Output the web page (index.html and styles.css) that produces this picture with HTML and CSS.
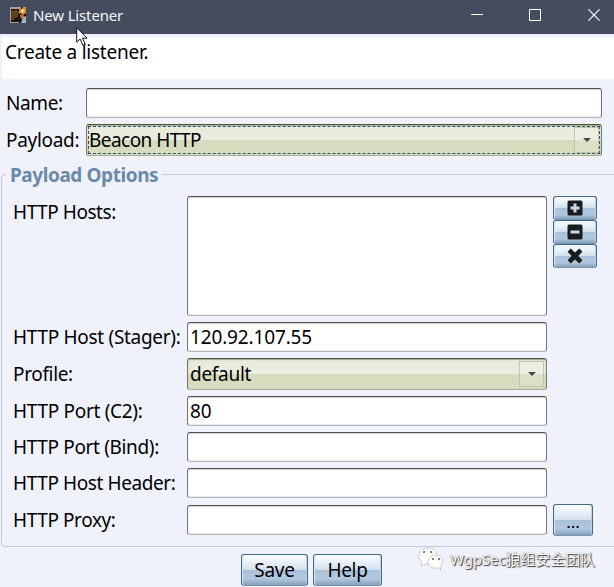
FILE: index.html
```html
<!DOCTYPE html>
<html lang="en">
<head>
<meta charset="utf-8">
<title>New Listener</title>
<link rel="stylesheet" href="styles.css">
</head>
<body>
<div class="window">
  <header class="titlebar">
    <svg class="app-icon" width="16" height="16" viewBox="0 0 16 16"><rect width="16" height="16" fill="#1a140f"/><path d="M0 0h11v2H0zM0 2h1v14H0zM0 15h9v1H0z" fill="#a9a294"/><path d="M1 3l3 1 2-2 3 3-1 5-3 1-2 3-2-2z" fill="#5c421d"/><path d="M9 1l2 2 2-3 3 0v6l-3 2-2-2-2 1z" fill="#df922c"/><path d="M11 2l3 1-1 3-2-1z" fill="#f8e2ae"/><path d="M10 8l3-1 1 3-3 2z" fill="#c9783a"/><path d="M13 10l3-1v7h-5z" fill="#a8b2b8"/></svg>
    <span class="title">New Listener</span>
    <div class="controls">
      <svg width="12" height="12" viewBox="0 0 12 12"><path d="M0 5.5h12" stroke="#fff"/></svg>
      <svg width="12" height="12" viewBox="0 0 12 12"><path d="M.5.5h11v11H.5z" fill="none" stroke="#fff"/></svg>
      <svg width="12" height="12" viewBox="0 0 12 12"><path d="M.4.4l11.2 11.2M11.6.4L.4 11.6" stroke="#fff" stroke-width="1.2"/></svg>
    </div>
  </header>
  <p class="description">Create a listener.</p>
  <div class="general">
    <span class="label name">Name:</span><div class="field"></div>
    <span class="label payload">Payload:</span>
    <div class="combo focused"><span class="beacon">Beacon HTTP</span><i class="arrow"></i></div>
  </div>
  <section class="options">
    <h2 class="legend">Payload Options</h2>
    <div class="row hosts"><span class="label">HTTP Hosts:</span><div class="field"></div>
      <div class="stack">
        <div class="button"><svg width="16" height="16" viewBox="0 0 16 16"><rect x=".5" y=".5" width="15" height="15" rx="1.5" fill="#1b1b1b"/><path d="M6.5 3.5h3v3h3v3h-3v3h-3v-3h-3v-3h3z" fill="#c5d9ec"/></svg></div>
        <div class="button"><svg width="16" height="16" viewBox="0 0 16 16"><rect x=".5" y=".5" width="15" height="15" rx="1.5" fill="#1b1b1b"/><path d="M3.5 6.5h9v3h-9z" fill="#c5d9ec"/></svg></div>
        <div class="button"><svg width="16" height="16" viewBox="0 0 16 16"><path d="M3.7.6L8 4.6 12.3.6 15.4 3.7 11.4 8l4 4.3-3.1 3.1L8 11.4l-4.3 4L.6 12.3 4.6 8 .6 3.7z" fill="#1b1b1b"/></svg></div>
      </div>
    </div>
    <div class="row"><span class="label stager">HTTP Host (Stager):</span><div class="field"><span class="ip">120.92.107.55</span></div></div>
    <div class="row"><span class="label profile">Profile:</span><div class="combo"><span class="default">default</span><i class="arrow"></i></div></div>
    <div class="row"><span class="label c2">HTTP Port (C2):</span><div class="field"><span>80</span></div></div>
    <div class="row"><span class="label bind">HTTP Port (Bind):</span><div class="field"></div></div>
    <div class="row"><span class="label header">HTTP Host Header:</span><div class="field"></div></div>
    <div class="row proxy"><span class="label">HTTP Proxy:</span><div class="field"></div><div class="button more">...</div></div>
  </section>
  <footer class="actions"><div class="button save">Save</div><div class="button help">Help</div></footer>
  <div class="watermark">
    <svg width="26" height="24" viewBox="0 0 26 24"><g stroke="#aaa" stroke-width=".8" stroke-dasharray="2 1"><path d="M10 1C4 1 1 5 1 9c0 3 1 5 3 6l-1 4 4-2c9 2 13-3 12-9C18 4 15 1 10 1z" fill="#fff"/><path d="M18 8c-5 0-8 3-8 7s4 7 10 6l3 2-1-3c6-5 2-12-4-12z" fill="#fff"/></g><path d="M5 5h2M12 5h2M14 12h2M20 12h2" stroke="#555" stroke-width="1.5"/></svg>
    <span>WgpSec狼组安全团队</span>
  </div>
  <svg class="cursor" width="13" height="20" viewBox="0 0 13 20"><path d="M.7.8v14.4l3.4-3.2 2.8 6.2 2.4-1-2.8-6h4.6z" fill="#fff" stroke="#111"/></svg>
</div>
</body>
</html>
```
FILE: styles.css
```css
* { box-sizing: border-box; }
body { margin: 0; background: #eff2fb; color: #000; font: 19px/24px "Noto Sans", "Noto Sans CJK SC", sans-serif; }
.window { position: relative; width: 614px; height: 587px; overflow: hidden; white-space: nowrap; }
.titlebar { display: flex; align-items: center; height: 34px; padding: 0 14px 4px 10px; background: #454c5f; color: #f5f5f5; }
.title { margin: -1px 0 0 7px; font-size: 15px; letter-spacing: -.15px; }
.controls { display: flex; gap: 47px; margin-left: auto; }
.controls svg:first-child { margin-right: -1px; }
.description { height: 42px; margin: 3px 0 0 2px; padding: 3px; background: #fff; letter-spacing: -.25px; }
.general { display: grid; grid-template-columns: 80px 516px; grid-template-rows: 30px 32px; row-gap: 6px; align-items: center; margin: 9px 0 0 6px; }
.label { letter-spacing: -.4px; }
.payload, .c2, .stager { letter-spacing: -.3px; }
.hosts .label { letter-spacing: -.45px; }
.profile { letter-spacing: -.35px; }
.bind { letter-spacing: -.35px; }
.beacon { letter-spacing: -.55px; }
.ip { letter-spacing: -.15px; }
.default { letter-spacing: -.28px; }
.field { height: 30px; padding: 2px; border: 1px solid #777; border-top-color: #505050; border-bottom-color: #b5b5b5; border-radius: 3px; background: #fff; box-shadow: inset 0 1px 1px #d2d2d2, inset 0 -1px #eee; }
.combo { display: flex; align-items: center; justify-content: space-between; height: 32px; padding: 0 2px; border: 1px solid #75796a; border-top-color: #50543f; border-bottom-color: #a9ad96; border-radius: 3px; background: linear-gradient(#e8ebda, #eaede0 50%, #d6dbbd 50%, #d8ddc1); box-shadow: inset 0 1px 1px #a6aa91, inset 0 -1px #d5d9c4; }
.focused { outline: 1px dashed #34536c; outline-offset: -3px; }
.arrow { display: flex; align-items: center; justify-content: center; width: 25px; height: 26px; border: 1px solid #c1c5b0; background: #ffffff20; }
.arrow::after { content: ""; border: 4px solid transparent; border-top-color: #454545; border-bottom: 0; }
.options { width: 630px; height: 373px; margin: 18px 0 0 1px; padding-left: 11px; border: 1px solid #bdcbdd; border-radius: 4px; }
.legend { width: max-content; height: 24px; margin: -12px 0 9px -7px; padding: 0 4px; background: #eff2fb; color: #6a8aa8; font-size: 19px; line-height: 24px; letter-spacing: -.43px; }
.row { display: grid; grid-template-columns: 174px 360px 44px; align-items: center; margin-bottom: 6px; }
.hosts { align-items: start; }
.hosts .label { padding-top: 4px; }
.hosts .field { height: 120px; }
.stack { margin-left: 6px; width: 44px; }
.button { display: flex; align-items: center; justify-content: center; border: 1px solid #446a87; border-bottom-color: #7792aa; border-radius: 3px; background: linear-gradient(#fdfeff, #d2e0ed 50%, #a8bfd9 50%, #b3c9df 78%, #86a2be); box-shadow: inset 1px 0 #dbe7f2, inset -1px 0 #bfd0e0; }
.stack .button { height: 24px; }
.proxy { grid-template-columns: 174px 360px 40px; height: 32px; }
.proxy .more { width: 40px; height: 32px; margin-left: 6px; padding-top: 4px; font-size: 17px; }
.actions { display: flex; gap: 5px; margin: 7px 0 0 241px; }
.actions .button { height: 32px; letter-spacing: -.3px; }
.save { width: 67px; }
.help { width: 69px; }
.watermark { position: absolute; left: 418px; top: 547px; display: flex; gap: 6px; align-items: center; color: #f7f7f7; font-size: 15px; letter-spacing: -.1px; text-shadow: 1px 1px 1px #333, 0 0 1px #777; }
.cursor { position: absolute; left: 76px; top: 27px; }
```
